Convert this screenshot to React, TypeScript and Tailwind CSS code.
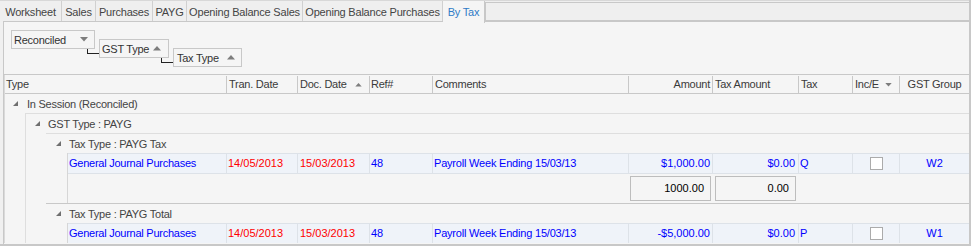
import React from "react";

const LINE = "border-[#c8c8c8]";

function TriDown({ className = "" }: { className?: string }) {
  return (
    <svg width="8" height="5" viewBox="0 0 8 5" className={className}>
      <polygon points="0,0 8,0 4,4.5" fill="#7d7d7d" />
    </svg>
  );
}
function TriUp({ className = "" }: { className?: string }) {
  return (
    <svg width="8" height="5" viewBox="0 0 8 5" className={className}>
      <polygon points="0,4.5 8,4.5 4,0" fill="#7d7d7d" />
    </svg>
  );
}
function Expanded() {
  return (
    <svg width="5" height="5" viewBox="0 0 5 5" className="shrink-0">
      <polygon points="5,0 5,5 0,5" fill="#6f6f6f" />
    </svg>
  );
}

const tabs = [
  { label: "Worksheet", w: 62 },
  { label: "Sales", w: 34 },
  { label: "Purchases", w: 57 },
  { label: "PAYG", w: 34 },
  { label: "Opening Balance Sales", w: 116 },
  { label: "Opening Balance Purchases", w: 140 },
];

function GroupRow({
  label,
  pl,
  gap,
  top,
  h,
}: {
  label: string;
  pl: string;
  gap: string;
  top?: string;
  h: string;
}) {
  return (
    <div className={`flex items-center ${h} ${pl} ${top ?? ""} text-[#444] tracking-[-0.25px]`}>
      <Expanded />
      <span className={`${gap} pt-[1px]`}>{label}</span>
    </div>
  );
}

function DataRow({
  amount,
  tax,
  group,
}: {
  amount: string;
  tax: string;
  group: string;
}) {
  const cell = "border-l border-[#dde2e8] flex items-center h-full";
  return (
    <div className="flex h-[20px] border-t border-[#dde2e8] bg-[#eff3f9] text-[#0000ff]">
      <div className="w-[158px] pl-[1px] flex items-center tracking-[-0.25px]">General Journal Purchases</div>
      <div className={`${cell} w-[71px] pl-[1px] text-[#ff0000]`}>14/05/2013</div>
      <div className={`${cell} w-[72px] pl-[2px] text-[#ff0000]`}>15/03/2013</div>
      <div className={`${cell} w-[63px] pl-[1px]`}>48</div>
      <div className={`${cell} w-[196px] pl-[1px] tracking-[-0.2px]`}>Payroll Week Ending 15/03/13</div>
      <div className={`${cell} w-[84px] justify-end pr-[2px]`}>{amount}</div>
      <div className={`${cell} w-[86px] justify-end pr-[3px]`}>$0.00</div>
      <div className={`${cell} w-[54px] pl-[1px]`}>{tax}</div>
      <div className={`${cell} w-[47px] justify-center`}>
        <div className="w-[13px] h-[13px] bg-white border border-[#ababab]" />
      </div>
      <div className={`${cell} w-[70px] justify-center`}>{group}</div>
    </div>
  );
}

export default function App() {
  return (
    <div className="w-[971px] h-[246px] overflow-hidden bg-[#f0f0f0] flex flex-col font-['Liberation_Sans',Arial,sans-serif] text-[11px] leading-none">
      <div className="flex h-[244px]">
        <div className="w-[969px] flex flex-col">
          {/* tab strip */}
          <div className="flex h-[22px] border-t border-[#d8d8d8] bg-[#efefef]">
            {tabs.map((t) => (
              <div
                key={t.label}
                style={{ width: t.w }}
                className="h-[21px] pt-[2px] flex items-center justify-center border-r border-[#d0d0d0] text-[#444] tracking-[-0.2px]"
              >
                {t.label}
              </div>
            ))}
            <div className="w-[42px] h-[22px] pt-[1px] flex items-center justify-center bg-[#f5f5f5] border-r border-[#c8c8c8] text-[#2f7bc6] tracking-[-0.2px] relative z-10">
              By Tax
            </div>
            <div className="flex-1 mt-[1px] h-[19px] bg-[#efefef] border-y border-l border-[#c8c8c8]" />
          </div>
          {/* main panel */}
          <div className="flex h-[222px]">
            <div className="w-[3px]" />
            <div className={`w-[966px] flex flex-col border-l border-t ${LINE} bg-[#f5f5f5] -mt-[1px] h-[223px]`}>
              {/* group panel */}
              <div className={`h-[53px] flex items-start border-b ${LINE} pl-[7px]`}>
                <div className={`mt-[8px] w-[84px] h-[19px] border ${LINE} flex items-center pl-[2px] text-[#333]`}>
                  <span className="tracking-[-0.25px] pt-[1px]">Reconciled</span>
                  <TriDown className="ml-auto mr-[6px]" />
                </div>
                <div className="-ml-[8px] mt-[27px] w-[12px] h-[5px] border-l border-b border-[#222]" />
                <div className={`mt-[17px] w-[70px] h-[19px] border ${LINE} flex items-center pl-[2px] text-[#333]`}>
                  <span className="tracking-[-0.25px] pt-[1px]">GST Type</span>
                  <TriUp className="ml-auto mr-[7px]" />
                </div>
                <div className="-ml-[8px] mt-[36px] w-[12px] h-[5px] border-l border-b border-[#222]" />
                <div className={`mt-[26px] w-[69px] h-[19px] border ${LINE} flex items-center pl-[3px] text-[#333]`}>
                  <span className="tracking-[-0.25px] pt-[1px]">Tax Type</span>
                  <TriUp className="ml-auto mr-[6px]" />
                </div>
              </div>
              {/* grid */}
              <div className="flex flex-col border-l border-[#dadada] w-[965px]">
                {/* header */}
                <div className={`flex h-[19px] pt-[1px] border-b ${LINE} text-[#3a3a3a] tracking-[-0.25px]`}>
                  <div className="w-[221px] flex items-center pl-[1px]">Type</div>
                  <div className={`w-[71px] border-l ${LINE} flex items-center pl-[2px]`}>Tran. Date</div>
                  <div className={`w-[72px] border-l ${LINE} flex items-center pl-[2px]`}>
                    Doc. Date
                    <TriUp className="ml-[8px] w-[7px] h-[4px]" />
                  </div>
                  <div className={`w-[63px] border-l ${LINE} flex items-center pl-[1px]`}>Ref#</div>
                  <div className={`w-[196px] border-l ${LINE} flex items-center pl-[2px]`}>Comments</div>
                  <div className={`w-[84px] border-l ${LINE} flex items-center justify-end pr-[2px]`}>Amount</div>
                  <div className={`w-[86px] border-l ${LINE} flex items-center pl-[2px]`}>Tax Amount</div>
                  <div className={`w-[54px] border-l ${LINE} flex items-center pl-[2px]`}>Tax</div>
                  <div className={`w-[47px] border-l ${LINE} flex items-center pl-[2px]`}>
                    Inc/E
                    <TriDown className="ml-[6px] w-[7px] h-[4px]" />
                  </div>
                  <div className={`w-[70px] border-l ${LINE} flex items-center justify-center`}>GST Group</div>
                </div>
                {/* body */}
                <GroupRow label="In Session (Reconciled)" pl="pl-[8px]" gap="ml-[9px]" h="h-[19px]" />
                <div className="ml-[20px] border-l border-[#dedede] flex flex-col">
                  <GroupRow
                    label="GST Type : PAYG"
                    pl="pl-[9px]"
                    gap="ml-[8px]"
                    top="border-t border-[#dedede]"
                    h="h-[20px]"
                  />
                  <div className="ml-[20px] flex flex-col">
                    <GroupRow
                      label="Tax Type : PAYG Tax"
                      pl="pl-[10px]"
                      gap="ml-[8px]"
                      top="border-t border-[#dedede]"
                      h="h-[20px]"
                    />
                    <div className="ml-[21px] border-l border-[#d6d6d6] flex flex-col">
                      <DataRow amount="$1,000.00" tax="Q" group="W2" />
                      <div className="flex h-[30px] border-t border-[#dde2e8] items-center">
                        <div className="w-[560px]" />
                        <div className="w-[84px] pl-[2px]">
                          <div className="w-[81px] h-[25px] border border-[#bdbdbd] flex items-center justify-end pr-[6px] text-black">
                            1000.00
                          </div>
                        </div>
                        <div className="w-[86px] pl-[3px]">
                          <div className="w-[81px] h-[25px] border border-[#bdbdbd] flex items-center justify-end pr-[6px] text-black">
                            0.00
                          </div>
                        </div>
                      </div>
                    </div>
                    <GroupRow
                      label="Tax Type : PAYG Total"
                      pl="pl-[10px]"
                      gap="ml-[8px]"
                      top={`border-t ${LINE}`}
                      h="h-[20px]"
                    />
                    <div className="ml-[21px] border-l border-[#d6d6d6] flex flex-col">
                      <DataRow amount="-$5,000.00" tax="P" group="W1" />
                    </div>
                  </div>
                </div>
              </div>
            </div>
          </div>
        </div>
        <div className="w-[2px] bg-[#c8c8c8]" />
      </div>
      <div className="h-[2px] bg-[#c8c8c8]" />
    </div>
  );
}
